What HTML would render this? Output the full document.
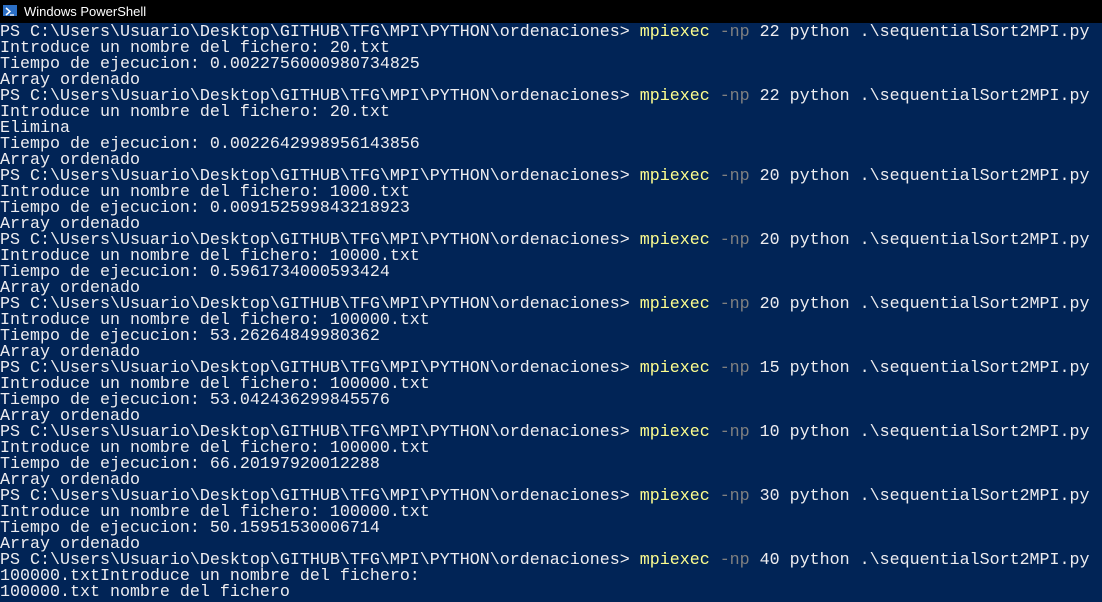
<!DOCTYPE html>
<html><head><meta charset="utf-8"><style>
html,body{margin:0;padding:0;width:1102px;height:586px;overflow:hidden;background:#012456}
#t{position:absolute;left:0;top:0;width:1102px;height:23px;background:#000;color:#fff;font:13px "Liberation Sans",sans-serif}
#t span{position:absolute;left:24px;top:4px}
#ic{position:absolute;left:3px;top:5px;width:14px;height:11px;background:#2b6fc5}
pre{position:absolute;left:0;top:25px;margin:0;font:16.67px/16px "Liberation Mono",monospace;color:#eeedf0;white-space:pre}
.y{color:#fefe8e}.g{color:#808080}
</style></head><body>
<div id="t"><div id="ic"><svg width="14" height="11"><path d="M3 2 L7 5.5 L3 9" stroke="#fff" stroke-width="1.5" fill="none"/><path d="M7 9 H11" stroke="#fff" stroke-width="1.2"/></svg></div><span>Windows PowerShell</span></div>
<pre>PS C:\Users\Usuario\Desktop\GITHUB\TFG\MPI\PYTHON\ordenaciones&gt; <span class="y">mpiexec</span> <span class="g">-np</span> 22 python .\sequentialSort2MPI.py
Introduce un nombre del fichero: 20.txt
Tiempo de ejecucion: 0.0022756000980734825
Array ordenado
PS C:\Users\Usuario\Desktop\GITHUB\TFG\MPI\PYTHON\ordenaciones&gt; <span class="y">mpiexec</span> <span class="g">-np</span> 22 python .\sequentialSort2MPI.py
Introduce un nombre del fichero: 20.txt
Elimina
Tiempo de ejecucion: 0.0022642998956143856
Array ordenado
PS C:\Users\Usuario\Desktop\GITHUB\TFG\MPI\PYTHON\ordenaciones&gt; <span class="y">mpiexec</span> <span class="g">-np</span> 20 python .\sequentialSort2MPI.py
Introduce un nombre del fichero: 1000.txt
Tiempo de ejecucion: 0.009152599843218923
Array ordenado
PS C:\Users\Usuario\Desktop\GITHUB\TFG\MPI\PYTHON\ordenaciones&gt; <span class="y">mpiexec</span> <span class="g">-np</span> 20 python .\sequentialSort2MPI.py
Introduce un nombre del fichero: 10000.txt
Tiempo de ejecucion: 0.5961734000593424
Array ordenado
PS C:\Users\Usuario\Desktop\GITHUB\TFG\MPI\PYTHON\ordenaciones&gt; <span class="y">mpiexec</span> <span class="g">-np</span> 20 python .\sequentialSort2MPI.py
Introduce un nombre del fichero: 100000.txt
Tiempo de ejecucion: 53.26264849980362
Array ordenado
PS C:\Users\Usuario\Desktop\GITHUB\TFG\MPI\PYTHON\ordenaciones&gt; <span class="y">mpiexec</span> <span class="g">-np</span> 15 python .\sequentialSort2MPI.py
Introduce un nombre del fichero: 100000.txt
Tiempo de ejecucion: 53.042436299845576
Array ordenado
PS C:\Users\Usuario\Desktop\GITHUB\TFG\MPI\PYTHON\ordenaciones&gt; <span class="y">mpiexec</span> <span class="g">-np</span> 10 python .\sequentialSort2MPI.py
Introduce un nombre del fichero: 100000.txt
Tiempo de ejecucion: 66.20197920012288
Array ordenado
PS C:\Users\Usuario\Desktop\GITHUB\TFG\MPI\PYTHON\ordenaciones&gt; <span class="y">mpiexec</span> <span class="g">-np</span> 30 python .\sequentialSort2MPI.py
Introduce un nombre del fichero: 100000.txt
Tiempo de ejecucion: 50.15951530006714
Array ordenado
PS C:\Users\Usuario\Desktop\GITHUB\TFG\MPI\PYTHON\ordenaciones&gt; <span class="y">mpiexec</span> <span class="g">-np</span> 40 python .\sequentialSort2MPI.py
100000.txtIntroduce un nombre del fichero:
100000.txt nombre del fichero
</pre>
</body></html>
